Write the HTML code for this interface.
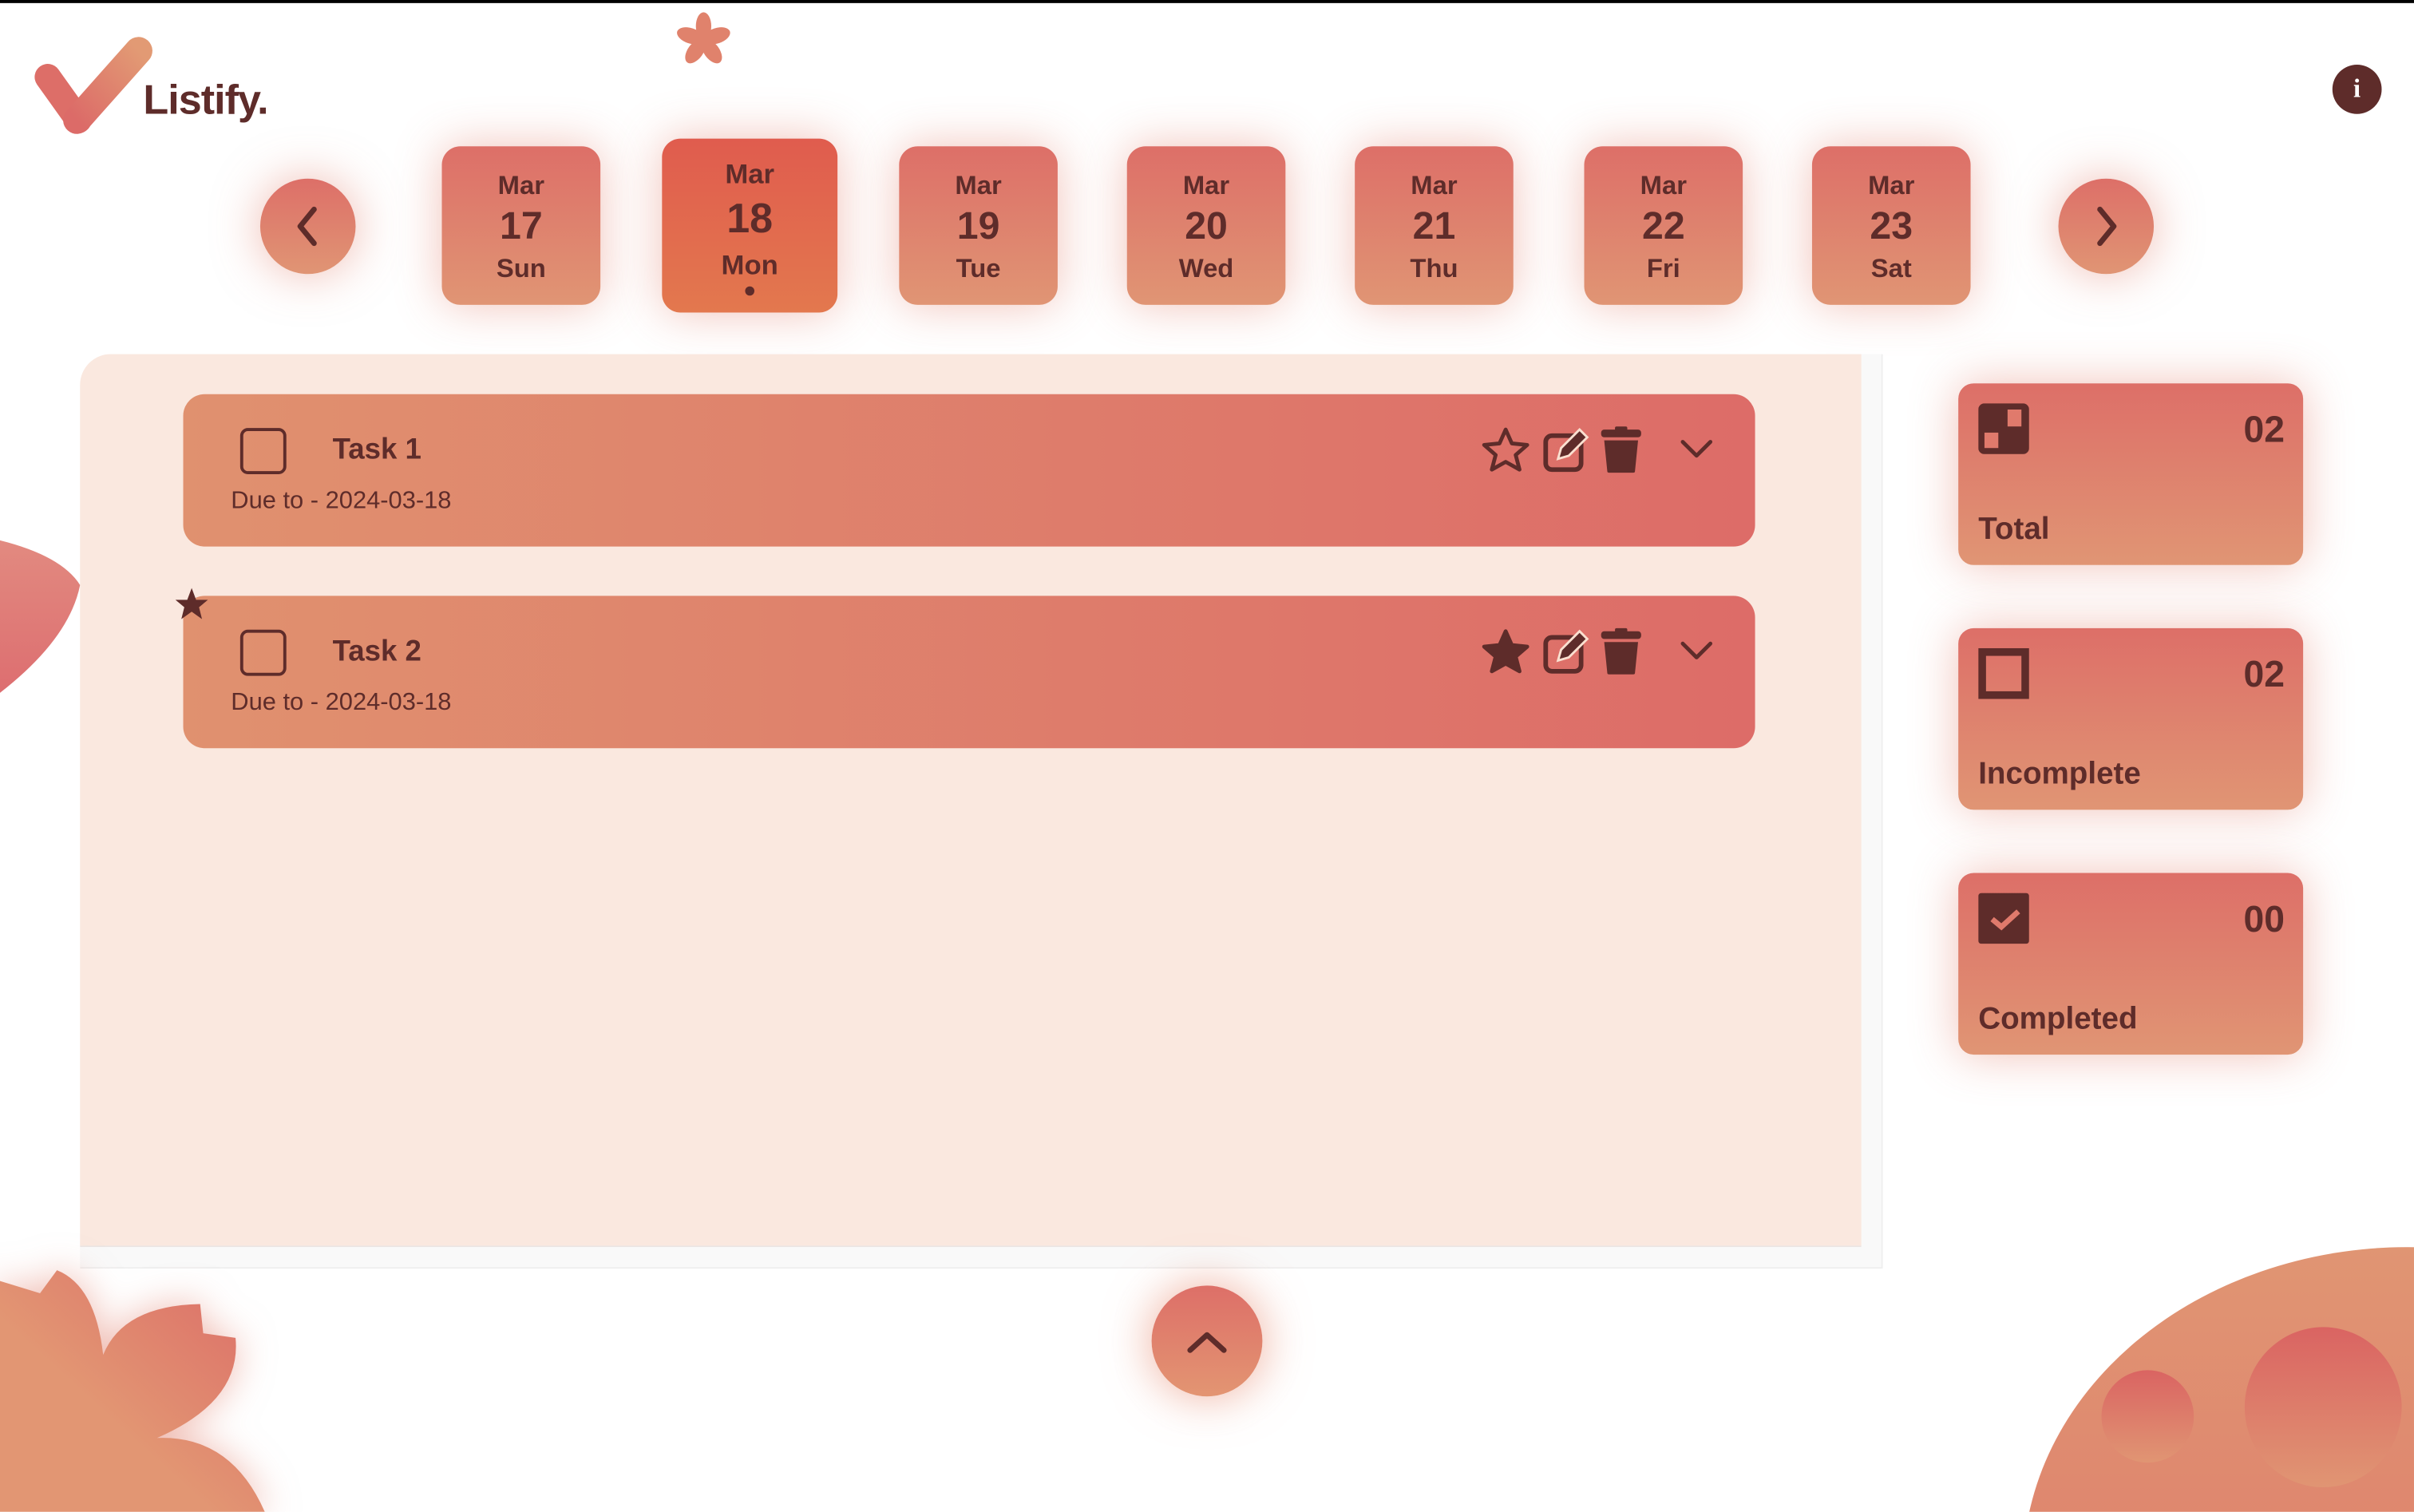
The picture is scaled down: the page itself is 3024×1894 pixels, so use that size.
<!DOCTYPE html>
<html><head><meta charset="utf-8">
<style>
html,body{margin:0;padding:0;width:3024px;height:1894px;overflow:hidden;background:#fff;}
#clip{position:absolute;left:0;top:0;width:3024px;height:1894px;overflow:hidden}
#w{position:absolute;left:0;top:0;width:1568px;height:982px;transform:scale(1.92857);transform-origin:0 0;font-family:"Liberation Sans",sans-serif;color:#5e2c2a;overflow:hidden;background:#fff}
.abs{position:absolute}
.g{background:linear-gradient(180deg,#dd6f68,#e09574);}
.date{position:absolute;top:95px;width:103px;height:103px;border-radius:12px;box-shadow:0 0 30px rgba(224,120,100,.45);text-align:center;font-weight:bold}
.date .m{position:absolute;top:16px;left:0;right:0;font-size:17px}
.date .d{position:absolute;top:38px;left:0;right:0;font-size:25px}
.date .w{position:absolute;top:70px;left:0;right:0;font-size:17px}
.circ{position:absolute;border-radius:50%;box-shadow:0 0 30px rgba(224,120,100,.5)}
.task{position:absolute;left:119px;width:1021px;height:99px;border-radius:14px;background:linear-gradient(90deg,#e0916f,#dd6c68)}
.task .cb{position:absolute;left:37px;top:22px;width:30px;height:30px;border:2.5px solid #5e2c2a;border-radius:5px;box-sizing:border-box}
.task .t{position:absolute;left:97px;top:26px;font-size:19px;font-weight:bold}
.task .du{position:absolute;left:31px;top:61px;font-size:16px}
.stat{position:absolute;left:1272px;width:224px;height:118px;border-radius:10px;box-shadow:0 0 30px rgba(224,120,100,.45)}
.stat .n{position:absolute;right:12px;top:17px;font-size:24px;font-weight:bold}
.stat .l{position:absolute;left:13px;top:84px;font-size:20px;font-weight:bold}
</style></head><body><div id="clip"><div id="w">
<div class="abs" style="left:0;top:0;width:1568px;height:2px;background:#000"></div>
<!-- logo -->
<svg class="abs" style="left:18px;top:20px" width="86" height="70" viewBox="0 0 86 70">
<defs><linearGradient id="lg" x1="0" y1="1" x2="1" y2="0"><stop offset="0" stop-color="#dc6b68"/><stop offset="1" stop-color="#e29a74"/></linearGradient></defs>
<line x1="13" y1="30" x2="33" y2="58" stroke="#dd6e68" stroke-width="17" stroke-linecap="round"/>
<line x1="32" y1="58" x2="72" y2="13" stroke="url(#lg)" stroke-width="18" stroke-linecap="round"/>
</svg>
<div class="abs" style="left:93px;top:50px;font-size:27px;font-weight:bold;letter-spacing:-0.5px">Listify.</div>
<!-- top flower -->
<svg class="abs" style="left:439px;top:7px" width="36" height="38" viewBox="-18 -19 36 38"><g fill="#e0826c">
<ellipse cx="0" cy="-9" rx="5" ry="9"/><ellipse cx="0" cy="-9" rx="5" ry="9" transform="rotate(72)"/><ellipse cx="0" cy="-9" rx="5" ry="9" transform="rotate(144)"/><ellipse cx="0" cy="-9" rx="5" ry="9" transform="rotate(216)"/><ellipse cx="0" cy="-9" rx="5" ry="9" transform="rotate(288)"/><circle r="6"/></g></svg>
<!-- info -->
<div class="abs" style="left:1515px;top:42px;width:32px;height:32px;border-radius:50%;background:#5e2c2a;color:#fff;text-align:center;font:bold 17px/32px 'Liberation Serif',serif">i</div>
<!-- arrows -->
<div class="circ g" style="left:169px;top:116px;width:62px;height:62px"></div>
<svg class="abs" style="left:169px;top:116px" width="62" height="62"><path d="M35 20 L26 31 L35 42" stroke="#5e2c2a" stroke-width="3.5" fill="none" stroke-linecap="round" stroke-linejoin="round"/></svg>
<div class="circ g" style="left:1337px;top:116px;width:62px;height:62px"></div>
<svg class="abs" style="left:1337px;top:116px" width="62" height="62"><path d="M27 20 L36 31 L27 42" stroke="#5e2c2a" stroke-width="3.5" fill="none" stroke-linecap="round" stroke-linejoin="round"/></svg>
<!-- dates -->
<div class="date g" style="left:287px"><div class="m">Mar</div><div class="d">17</div><div class="w">Sun</div></div>
<div class="date" style="left:430px;top:90px;width:114px;height:113px;background:linear-gradient(180deg,#e05c4e,#e3784e)"><div class="m" style="top:13px;font-size:18px">Mar</div><div class="d" style="top:37px;font-size:27px">18</div><div class="w" style="top:72px;font-size:18px">Mon</div><div class="abs" style="left:54px;top:96px;width:6px;height:6px;border-radius:50%;background:#5e2c2a"></div></div>
<div class="date g" style="left:584px"><div class="m">Mar</div><div class="d">19</div><div class="w">Tue</div></div>
<div class="date g" style="left:732px"><div class="m">Mar</div><div class="d">20</div><div class="w">Wed</div></div>
<div class="date g" style="left:880px"><div class="m">Mar</div><div class="d">21</div><div class="w">Thu</div></div>
<div class="date g" style="left:1029px"><div class="m">Mar</div><div class="d">22</div><div class="w">Fri</div></div>
<div class="date g" style="left:1177px"><div class="m">Mar</div><div class="d">23</div><div class="w">Sat</div></div>
<!-- main panel -->
<div class="abs" style="left:52px;top:230px;width:1170px;height:593px;background:#f9f9f9;border-right:1px solid #eee;border-bottom:1px solid #eee;border-radius:20px 0 0 0"></div>
<div class="abs" style="left:52px;top:230px;width:1157px;height:579px;background:#fae8df;border-radius:20px 0 0 0;border-bottom:1px solid #ebe5e3"></div>
<!-- left blob -->
<svg class="abs" style="left:0;top:345px" width="56" height="110" viewBox="0 0 56 110"><defs><linearGradient id="lb" x1="0" y1="0" x2="0" y2="1"><stop offset="0" stop-color="#e28a80"/><stop offset="1" stop-color="#dd6e70"/></linearGradient></defs>
<path d="M0 6 Q40 16 52 35 Q45 70 0 105Z" fill="url(#lb)"/></svg>
<!-- tasks -->
<div class="task" style="top:256px"><div class="cb"></div><div class="t">Task 1</div><div class="du">Due to - 2024-03-18</div></div>
<div class="task" style="top:387px"><div class="cb"></div><div class="t">Task 2</div><div class="du">Due to - 2024-03-18</div></div>
<svg class="abs" style="left:113px;top:381px" width="23" height="23" viewBox="0 0 24 24"><path d="M12 1 L15 9 L23 9 L17 14 L19 22 L12 17 L5 22 L7 14 L1 9 L9 9Z" fill="#5e2c2a"/></svg>
<!-- task icons -->
<svg class="abs" style="left:962px;top:276px" width="160" height="34" viewBox="0 0 160 34">
<path d="M16 3 L20 12 L30 13 L22.5 19.5 L25 29 L16 24 L7 29 L9.5 19.5 L2 13 L12 12Z" fill="none" stroke="#5e2c2a" stroke-width="2.5" stroke-linejoin="round"/>
<rect x="42" y="7" width="23" height="22" rx="4" fill="none" stroke="#5e2c2a" stroke-width="3"/>
<path d="M50 22 L52 15 L64 3 L69 8 L57 20Z" fill="#5e2c2a" stroke="#fae0d0" stroke-width="1.5"/>
<rect x="78" y="3" width="26" height="5" rx="2" fill="#5e2c2a"/><rect x="87" y="1" width="8" height="4" rx="1" fill="#5e2c2a"/>
<path d="M80 10 L102 10 L100 30 Q100 31 99 31 L83 31 Q82 31 82 30Z" fill="#5e2c2a"/>
<path d="M131 11 L140 20 L149 11" fill="none" stroke="#5e2c2a" stroke-width="2.5" stroke-linecap="round" stroke-linejoin="round"/>
</svg>
<svg class="abs" style="left:962px;top:407px" width="160" height="34" viewBox="0 0 160 34">
<path d="M16 3 L20 12 L30 13 L22.5 19.5 L25 29 L16 24 L7 29 L9.5 19.5 L2 13 L12 12Z" fill="#5e2c2a" stroke="#5e2c2a" stroke-width="2.5" stroke-linejoin="round"/>
<rect x="42" y="7" width="23" height="22" rx="4" fill="none" stroke="#5e2c2a" stroke-width="3"/>
<path d="M50 22 L52 15 L64 3 L69 8 L57 20Z" fill="#5e2c2a" stroke="#fae0d0" stroke-width="1.5"/>
<rect x="78" y="3" width="26" height="5" rx="2" fill="#5e2c2a"/><rect x="87" y="1" width="8" height="4" rx="1" fill="#5e2c2a"/>
<path d="M80 10 L102 10 L100 30 Q100 31 99 31 L83 31 Q82 31 82 30Z" fill="#5e2c2a"/>
<path d="M131 11 L140 20 L149 11" fill="none" stroke="#5e2c2a" stroke-width="2.5" stroke-linecap="round" stroke-linejoin="round"/>
</svg>
<!-- stats -->
<div class="stat g" style="top:249px"><svg class="abs" style="left:13px;top:13px" width="33" height="33"><rect width="33" height="33" rx="4" fill="#5e2c2a"/><rect x="19" y="4" width="9" height="11" fill="#e07a6c"/><rect x="4" y="19" width="9" height="10" fill="#e07a6c"/></svg><div class="n">02</div><div class="l">Total</div></div>
<div class="stat g" style="top:408px"><svg class="abs" style="left:13px;top:13px" width="33" height="33"><rect x="2.5" y="2.5" width="28" height="28" fill="none" stroke="#5e2c2a" stroke-width="5"/></svg><div class="n">02</div><div class="l">Incomplete</div></div>
<div class="stat g" style="top:567px"><svg class="abs" style="left:13px;top:13px" width="33" height="33"><rect width="33" height="33" rx="2" fill="#5e2c2a"/><path d="M9 17 L15 22 L26 12" fill="none" stroke="#e07a6c" stroke-width="3.5"/></svg><div class="n">00</div><div class="l">Completed</div></div>
<!-- up btn -->
<div class="circ" style="left:748px;top:835px;width:72px;height:72px;background:linear-gradient(180deg,#dd6f68,#e39572);box-shadow:0 0 30px rgba(226,120,90,.6)"></div>
<svg class="abs" style="left:748px;top:835px" width="72" height="72"><path d="M25 42 L36 32 L47 42" fill="none" stroke="#5e2c2a" stroke-width="3.5" stroke-linecap="round" stroke-linejoin="round"/></svg>
<!-- bottom left flower -->
<svg class="abs" style="left:0;top:820px;filter:drop-shadow(0 0 12px rgba(224,120,100,.5))" width="200" height="162" viewBox="0 0 200 162">
<defs><linearGradient id="fl" x1="1" y1="0" x2="0" y2="1"><stop offset="0" stop-color="#dc6b67"/><stop offset=".6" stop-color="#e29673"/></linearGradient></defs>
<path d="M0 12 L26 20 L37 5 Q62 15 67 60 Q80 28 130 27 L132 46 L153 49 Q157 90 102 114 Q150 112 172 162 L0 162Z" fill="url(#fl)"/>
</svg>
<!-- bottom right circle -->
<div class="abs" style="left:1314px;top:810px;width:254px;height:172px;overflow:hidden">
<div class="abs" style="left:0;top:0;width:500px;height:420px;border-radius:50%;background:linear-gradient(180deg,#e09573,#dd7468)"></div>
<div class="abs" style="left:51px;top:80px;width:60px;height:60px;border-radius:50%;background:linear-gradient(180deg,#da6462,#e09573)"></div>
<div class="abs" style="left:144px;top:52px;width:102px;height:104px;border-radius:50%;background:linear-gradient(180deg,#da6462,#e09573)"></div>
</div>
</div></div></body></html>
